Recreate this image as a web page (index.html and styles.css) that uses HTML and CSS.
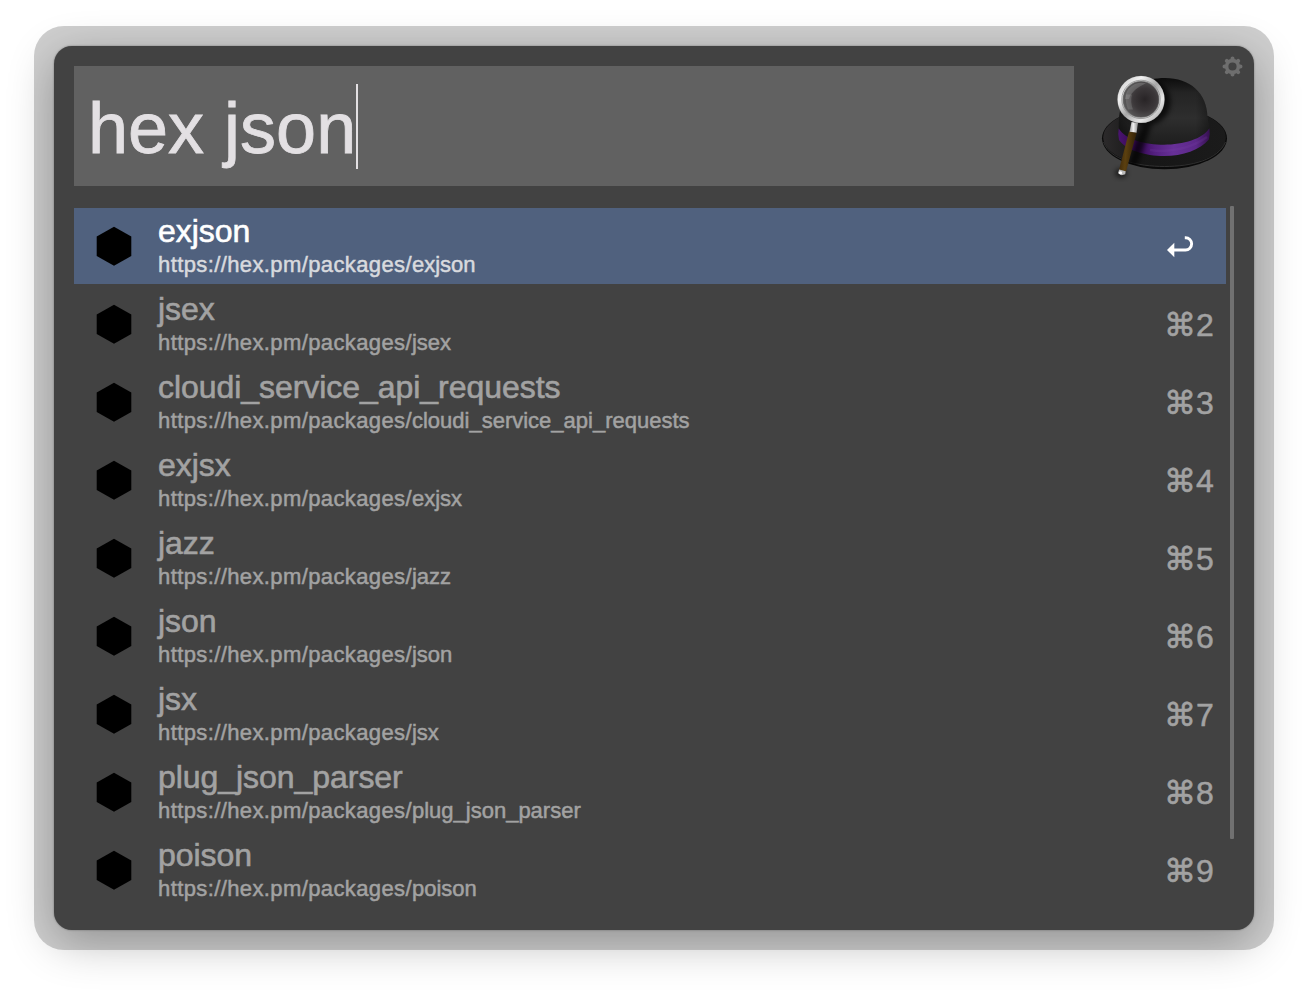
FILE: index.html
```html
<!DOCTYPE html>
<html lang="en">
<head>
<meta charset="utf-8">
<title>hex json</title>
<link rel="stylesheet" href="styles.css">
</head>
<body>
<svg class="defs" width="0" height="0">
  <symbol id="hexagon" viewBox="0 0 36 40"><path d="M18 .8 35.300 10.500V30L18 39.800.7 30V10.500Z"/></symbol>
</svg>
<main class="frame">
  <section class="panel">
    <header class="top">
      <div class="query"><span class="query-text">hex json</span><span class="caret"></span></div>
      <svg class="hat" viewBox="1098 70 132 112">
        <defs>
          <linearGradient id="brim" x1="0" x2="1"><stop offset="0" stop-color="#2c2a2b"/><stop offset=".3" stop-color="#161616"/><stop offset="1" stop-color="#1b1b1b"/></linearGradient>
          <linearGradient id="crown" x1="0" y1="0" x2="0" y2="1"><stop offset="0" stop-color="#0c0c0c"/><stop offset=".22" stop-color="#242424"/><stop offset=".6" stop-color="#2e2e2e"/><stop offset="1" stop-color="#1d1d1d"/></linearGradient>
          <linearGradient id="side" x1="0" x2="1"><stop offset="0" stop-color="#000" stop-opacity=".5"/><stop offset=".3" stop-color="#000" stop-opacity="0"/><stop offset=".85" stop-color="#000" stop-opacity="0"/><stop offset="1" stop-color="#000" stop-opacity=".35"/></linearGradient>
          <linearGradient id="band" x1="0" x2="1"><stop offset="0" stop-color="#4a1470"/><stop offset=".2" stop-color="#340752"/><stop offset=".4" stop-color="#542080"/><stop offset=".6" stop-color="#673097"/><stop offset=".85" stop-color="#5c2889"/><stop offset="1" stop-color="#35104f"/></linearGradient>
          <linearGradient id="rim" x1="0" y1="0" x2="1" y2="1"><stop offset="0" stop-color="#c9c9c9"/><stop offset=".25" stop-color="#f2f2f2"/><stop offset=".5" stop-color="#a8a8a8"/><stop offset=".75" stop-color="#e8e8e8"/><stop offset="1" stop-color="#a4a4a4"/></linearGradient>
          <radialGradient id="glass" cx=".6" cy=".5" r=".6"><stop offset="0" stop-color="#282426"/><stop offset=".5" stop-color="#3b3739"/><stop offset="1" stop-color="#606060"/></radialGradient>
          <linearGradient id="grip" x1="0" x2="1" y1="0" y2=".15"><stop offset="0" stop-color="#35230a"/><stop offset=".45" stop-color="#5c400f"/><stop offset="1" stop-color="#302007"/></linearGradient>
          <linearGradient id="steel" x1="0" x2="1"><stop offset="0" stop-color="#999"/><stop offset=".45" stop-color="#f2f2f2"/><stop offset="1" stop-color="#888"/></linearGradient>
          <filter id="soft" x="-50%" y="-50%" width="200%" height="200%"><feGaussianBlur stdDeviation="2.4"/></filter>
          <clipPath id="hatclip"><path d="M1119 130C1117 94 1139 78 1165 78S1207 95 1207.5 116A62.500 30.500 0 1 1 1120 117Z"/></clipPath>
        </defs>
        <ellipse cx="1164.500" cy="138.300" rx="62.500" ry="31" fill="#0a0a0a"/>
        <ellipse cx="1164.500" cy="137.300" rx="61.300" ry="29.300" fill="url(#brim)"/>
        <path d="M1103.500 142C1110 160 1138 166.500 1164.500 166.500S1218 160 1225.500 142" fill="none" stroke="#3a3a3a" stroke-width=".8"/>
        <path d="M1119 133C1118 122 1119 112 1122 103C1128 86 1145 78 1165 78C1190 78 1207 93 1207.500 117L1209.300 130C1195 150 1133 150 1119 133Z" fill="url(#crown)"/>
        <path d="M1119 133C1118 122 1119 112 1122 103C1128 86 1145 78 1165 78C1190 78 1207 93 1207.500 117L1209.300 130C1195 150 1133 150 1119 133Z" fill="url(#side)"/>
        <path d="M1118.700 128.500C1126 140 1145 144.700 1164 144.700S1203 139 1209.300 128.300Q1210.500 134 1208.800 139.500C1200 150 1183 156 1164 156S1126 150 1119 140Q1117.600 134 1118.700 128.500Z" fill="url(#band)"/>
        <path d="M1150 150C1170 153 1192 148 1207 137" fill="none" stroke="#7b43a8" stroke-opacity=".2" stroke-width="2.500"/>
        <g clip-path="url(#hatclip)" filter="url(#soft)" opacity=".7">
          <circle cx="1147" cy="102" r="23.500"/>
          <path d="m1143 122 9 2-19 53-9-2Z"/>
        </g>
        <ellipse cx="1121" cy="173" rx="6" ry="4.500" filter="url(#soft)" opacity=".6"/>
        <circle cx="1141" cy="99.400" r="19" fill="url(#glass)"/>
        <path d="M1125 99A16.500 16.500 0 0 1 1146 83.300C1138 87 1131 92 1129 99Z" fill="#aaa" opacity=".3"/>
        <path d="M1126 94.500h6q-2 7.500 1 15h-5q-3-7-2-15Z" fill="#aaa" opacity=".25"/>
        <circle cx="1141" cy="99.400" r="20.700" fill="none" stroke="#777" stroke-width="6"/>
        <circle cx="1141" cy="99.400" r="20.900" fill="none" stroke="url(#rim)" stroke-width="5"/>
        <circle cx="1141" cy="99.400" r="19.200" fill="none" stroke="#8b8b8b" stroke-width=".8"/>
        <path d="m1131.500 122 6.500 1-1.500 10-7-1Z" fill="url(#steel)"/>
        <path d="m1129 131.800 7.700.9L1126 171.500l-7-1.700Z" fill="url(#grip)"/>
        <path d="m1119.200 169.600 6.500 1.600-.5 3-3.500 1.100-3.700-2Z" fill="#bbb"/>
        <circle cx="1120.500" cy="172.800" r="1.600" fill="#fff"/>
      </svg>
    </header>
    <div class="body">
      <ul class="results">
        <li class="row selected"><svg class="hex"><use href="#hexagon"/></svg><div class="info"><div class="name">exjson</div><div class="url"><span class="base">https://hex.pm/packages/</span>exjson</div></div>
          <svg class="enter" viewBox="0 0 28 22"><path d="M0 14 7.300 6.800V21.200Z"/><path class="line" d="M6 14H18.500A6.150 6.150 0 0 0 18.500 1.700H17.800"/></svg></li>
        <li class="row"><svg class="hex"><use href="#hexagon"/></svg><div class="info"><div class="name">jsex</div><div class="url"><span class="base">https://hex.pm/packages/</span>jsex</div></div><div class="key"><span class="cmd">⌘</span>2</div></li>
        <li class="row"><svg class="hex"><use href="#hexagon"/></svg><div class="info"><div class="name">cloudi_service_api_requests</div><div class="url"><span class="base">https://hex.pm/packages/</span>cloudi_service_api_requests</div></div><div class="key"><span class="cmd">⌘</span>3</div></li>
        <li class="row"><svg class="hex"><use href="#hexagon"/></svg><div class="info"><div class="name">exjsx</div><div class="url"><span class="base">https://hex.pm/packages/</span>exjsx</div></div><div class="key"><span class="cmd">⌘</span>4</div></li>
        <li class="row"><svg class="hex"><use href="#hexagon"/></svg><div class="info"><div class="name">jazz</div><div class="url"><span class="base">https://hex.pm/packages/</span>jazz</div></div><div class="key"><span class="cmd">⌘</span>5</div></li>
        <li class="row"><svg class="hex"><use href="#hexagon"/></svg><div class="info"><div class="name">json</div><div class="url"><span class="base">https://hex.pm/packages/</span>json</div></div><div class="key"><span class="cmd">⌘</span>6</div></li>
        <li class="row"><svg class="hex"><use href="#hexagon"/></svg><div class="info"><div class="name">jsx</div><div class="url"><span class="base">https://hex.pm/packages/</span>jsx</div></div><div class="key"><span class="cmd">⌘</span>7</div></li>
        <li class="row"><svg class="hex"><use href="#hexagon"/></svg><div class="info"><div class="name">plug_json_parser</div><div class="url"><span class="base">https://hex.pm/packages/</span>plug_json_parser</div></div><div class="key"><span class="cmd">⌘</span>8</div></li>
        <li class="row"><svg class="hex"><use href="#hexagon"/></svg><div class="info"><div class="name">poison</div><div class="url"><span class="base">https://hex.pm/packages/</span>poison</div></div><div class="key"><span class="cmd">⌘</span>9</div></li>
      </ul>
      <div class="scrollbar"></div>
    </div>
    <svg class="gear" viewBox="-10.500 -10.500 21 21">
      <circle r="5.900" fill="none" stroke-width="3.600"/>
      <g stroke-width="4" stroke-linecap="round"><path d="M0-7.300V-8M0 7.300V8M-7.300 0H-8M7.300 0H8M5.100-5.100l.6-.6M-5.100-5.100l-.6-.6M5.100 5.100l.6.6M-5.100 5.100l-.6.6"/></g>
    </svg>
  </section>
</main>
</body>
</html>
```
FILE: styles.css
```css
* { box-sizing: border-box; }
body {
  margin: 0;
  height: 992px;
  padding: 26px 34px;
  overflow: hidden;
  background: #fff;
  font-family: "Liberation Sans", Arial, sans-serif;
}
.defs { display: none; }
.frame {
  width: 1240px;
  height: 924px;
  padding: 20px;
  border-radius: 30px;
  background: rgba(0, 0, 0, .19);
}
.panel {
  position: relative;
  width: 1200px;
  height: 884px;
  padding: 20px;
  border-radius: 18px;
  background: #424242;
  box-shadow: 0 12px 46px rgba(0, 0, 0, .3), 0 0 2px rgba(0, 0, 0, .4);
}
.top { display: flex; height: 120px; }
.query {
  display: flex;
  align-items: flex-start;
  width: 1000px;
  height: 120px;
  padding: 18px 0 0 14px;
  background: #616161;
  color: #e3e0e3;
  font-size: 72px;
  line-height: 88px;
  white-space: pre;
}
.query-text { width: 268px; -webkit-text-stroke: .8px; }
.caret { width: 2px; height: 85px; background: #e3e0e3; }
.hat { width: 132px; height: 112px; margin: 4px 0 0 24px; }
.gear {
  position: absolute;
  top: 10px;
  right: 11px;
  width: 21px;
  height: 21px;
  stroke: #6e6e6e;
}
.body { display: flex; gap: 4px; padding-top: 20px; }
.results {
  display: flex;
  flex-direction: column;
  gap: 2px;
  width: 1152px;
  margin: 2px 0 0;
  padding: 0;
  list-style: none;
}
.row {
  display: flex;
  height: 76px;
  padding: 0 12px 0 22px;
  color: #a2a2a2;
}
.selected { background: #50617e; color: #fff; }
.hex { width: 36px; height: 40px; margin-top: 18px; fill: #000; }
.info { flex: 1; padding: 5px 0 0 26px; }
.name { font-size: 32px; line-height: 36px; letter-spacing: -.05px; -webkit-text-stroke: .6px; }
.url { margin-top: 3px; font-size: 22px; line-height: 26px; -webkit-text-stroke: .5px; }
.base { letter-spacing: .39px; }
.selected .url { color: #d8dade; }
.key { display: flex; width: 48px; padding-top: 21px; font-size: 32px; line-height: 36px; -webkit-text-stroke: .5px; }
.cmd { width: 32px; margin-left: -2px; font-family: "DejaVu Sans", sans-serif; font-size: 32px; -webkit-text-stroke: .6px; }
.enter { width: 28px; height: 22px; margin: 28px 19px 0 0; fill: #fff; }
.enter .line { fill: none; stroke: #fff; stroke-width: 2.900; }
.scrollbar { width: 4px; height: 633px; border-radius: 1px; background: #717171; }
```
